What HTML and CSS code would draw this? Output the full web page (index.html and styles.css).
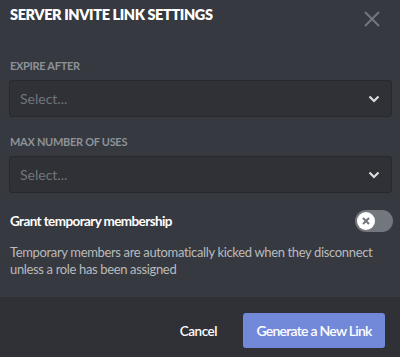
FILE: index.html
```html
<!DOCTYPE html>
<html lang="en">
<head>
    <meta charset="UTF-8">
    <title>Server Invite Link Settings</title>
    <meta name="viewport" content="width=device-width, initial-scale=1.0">
    <link rel="stylesheet" href="styles.css">
</head>
<body>
    <div class="modal">
        <div class="modal-header">
            <h2 class="modal-title">SERVER INVITE LINK SETTINGS</h2>
            <button class="close-btn" aria-label="Close">
                <svg width="16" height="16" viewBox="0 0 16 16">
                    <path d="M1 1 L15 15 M15 1 L1 15" stroke="#72767d" stroke-width="2" fill="none"/>
                </svg>
            </button>
        </div>

        <div class="modal-body">
            <div class="field">
                <div class="field-label">EXPIRE AFTER</div>
                <div class="select">
                    <span class="select-placeholder">Select...</span>
                    <svg class="chevron" width="12" height="8" viewBox="0 0 12 8">
                        <path d="M1.5 1.5 L6 6 L10.5 1.5" stroke="#dcddde" stroke-width="2.2" fill="none"/>
                    </svg>
                </div>
            </div>

            <div class="field">
                <div class="field-label">MAX NUMBER OF USES</div>
                <div class="select">
                    <span class="select-placeholder">Select...</span>
                    <svg class="chevron" width="12" height="8" viewBox="0 0 12 8">
                        <path d="M1.5 1.5 L6 6 L10.5 1.5" stroke="#dcddde" stroke-width="2.2" fill="none"/>
                    </svg>
                </div>
            </div>

            <div class="switch-row">
                <span class="switch-title">Grant temporary membership</span>
                <div class="switch">
                    <div class="switch-knob">
                        <svg width="10" height="10" viewBox="0 0 10 10">
                            <path d="M2 2 L8 8 M8 2 L2 8" stroke="#72767d" stroke-width="2" fill="none"/>
                        </svg>
                    </div>
                </div>
            </div>
            <p class="switch-note">Temporary members are automatically kicked when they disconnect unless a role has been assigned</p>
        </div>

        <div class="modal-footer">
            <button class="cancel-btn">Cancel</button>
            <button class="primary-btn">Generate a New Link</button>
        </div>
    </div>
</body>
</html>
```

FILE: styles.css
```css
:root {
    --bg-primary: #36393f;
    --bg-secondary: #2f3136;
    --text-normal: #dcddde;
    --text-muted: #8e9297;
    --blurple: #7289da;
}

body {
    margin: 0;
    background: var(--bg-primary);
    font-family: Lato, 'Open Sans', sans-serif;
    color: var(--text-normal);
}

.modal {
    width: 400px;
    height: 357px;
    display: flex;
    flex-direction: column;
}

.modal-header {
    display: flex;
    justify-content: space-between;
    align-items: flex-start;
    padding: 5px 20px 0 10px;
}

.modal-title {
    margin: 0;
    font-size: 14.5px;
    line-height: 20px;
    font-weight: 800;
    letter-spacing: -0.4px;
    color: #fff;
}

.close-btn {
    background: none;
    border: none;
    padding: 0;
    margin-top: 6px;
    cursor: pointer;
    display: flex;
}

.modal-body {
    flex: 1;
    padding: 31px 8px 0 9px;
}

.field {
    margin-bottom: 17px;
}

.field-label {
    font-size: 11px;
    line-height: 16px;
    font-weight: 700;
    letter-spacing: -0.3px;
    color: var(--text-muted);
    padding-left: 1px;
    margin-bottom: 6px;
}

.select {
    height: 35px;
    display: flex;
    align-items: center;
    justify-content: space-between;
    padding: 0 11px 0 10px;
    background: var(--bg-secondary);
    border: 1px solid #27292d;
    border-radius: 3px;
}

.select-placeholder {
    font-size: 14px;
    color: #72767d;
}

.switch-row {
    display: flex;
    justify-content: space-between;
    align-items: center;
    padding-left: 1px;
    margin-right: -1px;
}

.switch-title {
    font-size: 13.5px;
    font-weight: 700;
    letter-spacing: -0.6px;
    color: #fff;
}

.switch {
    width: 38px;
    height: 22px;
    border-radius: 11px;
    background: #72767d;
    display: flex;
    align-items: center;
    padding-left: 2px;
    box-sizing: border-box;
}

.switch-knob {
    width: 18px;
    height: 18px;
    border-radius: 50%;
    background: #fff;
    display: flex;
    align-items: center;
    justify-content: center;
}

.switch-note {
    margin: 12px 0 0 1px;
    font-size: 13px;
    line-height: 17px;
    letter-spacing: -0.35px;
    color: #b9bbbe;
}

.modal-footer {
    background: var(--bg-secondary);
    height: 60px;
    display: flex;
    justify-content: flex-end;
    align-items: flex-start;
    padding: 16px 15px 0;
    box-sizing: border-box;
    gap: 26px;
}

.cancel-btn {
    background: none;
    border: none;
    color: #fff;
    font-family: inherit;
    font-size: 13.5px;
    font-weight: 600;
    letter-spacing: -0.5px;
    height: 35px;
    padding: 0;
    cursor: pointer;
}

.primary-btn {
    background: var(--blurple);
    border: none;
    border-radius: 3px;
    color: #fff;
    font-family: inherit;
    font-size: 14px;
    font-weight: 600;
    letter-spacing: -0.75px;
    width: 142px;
    height: 35px;
    cursor: pointer;
}
```
